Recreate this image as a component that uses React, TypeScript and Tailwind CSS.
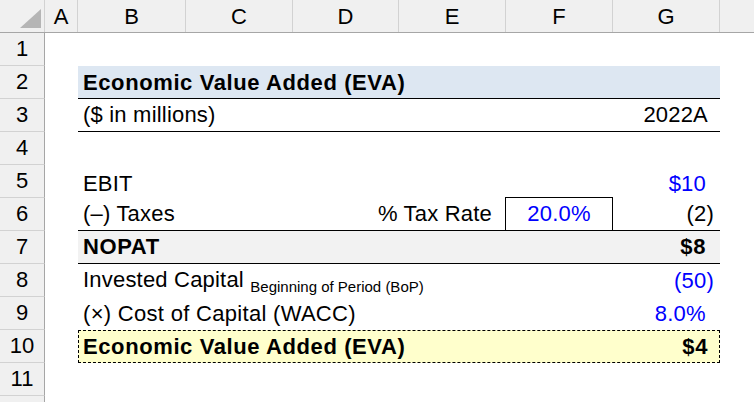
const colHeads = [
  { label: "A", w: "w-[33px]" },
  { label: "B", w: "w-[108px]" },
  { label: "C", w: "w-[107px]" },
  { label: "D", w: "w-[106px]" },
  { label: "E", w: "w-[107px]" },
  { label: "F", w: "w-[107px]" },
  { label: "G", w: "w-[107px]" },
];

const Row = ({
  n,
  children,
  className = "",
}: {
  n?: number;
  children?: React.ReactNode;
  className?: string;
}) => (
  <div className="flex h-[33px] shrink-0">
    <div className="w-[45px] shrink-0 bg-[#f0f0f0] border-r border-b border-r-[#a6a6a6] border-b-[#d2d2d2] flex items-center justify-center text-[22px] leading-none">
      {n}
    </div>
    <div className="w-[33px] shrink-0" />
    <div className={`w-[642px] shrink-0 grid grid-cols-[108px_107px_106px_107px_107px_107px] whitespace-nowrap ${className}`}>
      {children}
    </div>
    <div className="flex-1" />
  </div>
);

export default function App() {
  return (
    <div className="w-[754px] h-[402px] overflow-hidden bg-white text-black font-['Liberation_Sans',Arial,sans-serif]">
      {/* column headers */}
      <div className="flex h-[33px] bg-[#f0f0f0] border-b border-[#a6a6a6]">
        <div className="w-[45px] shrink-0 border-r border-[#d2d2d2]">
          <svg width="44" height="32" viewBox="0 0 44 32">
            <polygon points="20,28 41,28 41,9" fill="#b5b5b5" />
          </svg>
        </div>
        {colHeads.map((c) => (
          <div
            key={c.label}
            className={`${c.w} shrink-0 border-r border-[#d2d2d2] flex items-center justify-center text-[22px] leading-none pt-[2px]`}
          >
            {c.label}
          </div>
        ))}
        <div className="flex-1" />
      </div>

      <Row n={1} />
      <Row n={2} className="bg-[#dde7f2] border-b border-black items-end pb-[2px] text-[22px] leading-[26px] font-bold tracking-[0.6px]">
        <div className="col-span-6 pl-[5px]">Economic Value Added (EVA)</div>
      </Row>
      <Row n={3} className="border-b border-black items-center text-[22px] leading-[26px] tracking-[0.2px]">
        <div className="col-span-5 pl-[5px]">($ in millions)</div>
        <div className="text-right pr-[12px]">2022A</div>
      </Row>
      <Row n={4} />
      <Row n={5} className="items-end pb-[1px] text-[22px] leading-[26px] tracking-[0.2px]">
        <div className="col-span-5 pl-[5px]">EBIT</div>
        <div className="text-right pr-[14px] text-[#0000ff]">$10</div>
      </Row>
      <Row n={6} className="border-b border-black text-[22px] leading-[26px] tracking-[0.2px]">
        <div className="col-span-2 pl-[5px] self-center">(–) Taxes</div>
        <div className="col-span-2 text-right pr-[14px] self-center">% Tax Rate</div>
        <div className="-ml-px -mt-px border-l border-t border-r border-black flex items-center justify-center text-[#0000ff]">
          20.0%
        </div>
        <div className="text-right pr-[6px] self-center">(2)</div>
      </Row>
      <Row n={7} className="bg-[#f2f2f2] border-b border-black items-center text-[22px] leading-[26px] font-bold tracking-[0.6px]">
        <div className="col-span-5 pl-[5px]">NOPAT</div>
        <div className="text-right pr-[14px]">$8</div>
      </Row>
      <Row n={8} className="items-center text-[22px] leading-[26px] tracking-[0.2px]">
        <div className="col-span-5 pl-[5px]">
          Invested Capital{" "}
          <span className="text-[15px] relative top-[5px] tracking-normal">Beginning of Period (BoP)</span>
        </div>
        <div className="text-right pr-[6px] text-[#0000ff]">(50)</div>
      </Row>
      <Row n={9} className="items-center text-[22px] leading-[26px] tracking-[0.3px]">
        <div className="col-span-5 pl-[5px]">(×) Cost of Capital (WACC)</div>
        <div className="text-right pr-[14px] text-[#0000ff]">8.0%</div>
      </Row>
      <Row n={10} className="bg-[#ffffcc] border border-dashed border-black items-center text-[22px] leading-[26px] font-bold tracking-[0.6px]">
        <div className="col-span-5 pl-[4px]">Economic Value Added (EVA)</div>
        <div className="text-right pr-[13px]">$4</div>
      </Row>
      <Row n={11} />
      <Row />
    </div>
  );
}
